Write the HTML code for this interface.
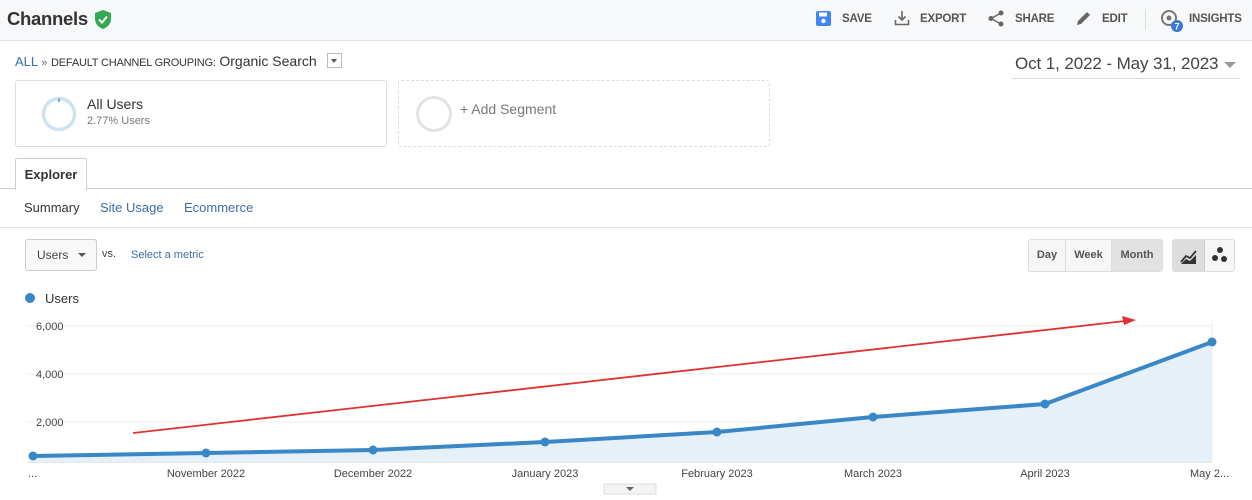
<!DOCTYPE html>
<html><head><style>
body{margin:0;width:1252px;height:500px;background:#fff;font-family:"Liberation Sans",Arial,sans-serif;position:relative;overflow:hidden;color:#333}
.a{position:absolute}
.hdr{left:0;top:0;width:1252px;height:40px;background:#f7f8f9;border-bottom:1px solid #e3e3e3}
.tb{font-size:11.5px;color:#555;font-weight:bold;top:13px;letter-spacing:-0.2px}
.link{color:#3b6ea5}
</style></head><body>
<div class="a hdr"></div>
<div class="a" style="left:7px;top:8px;font-size:18.5px;font-weight:bold;color:#333;letter-spacing:-0.3px">Channels</div>
<svg class="a" style="left:94px;top:10px" width="18" height="19" viewBox="0 0 18 19"><path d="M9 0L17 3V9C17 14 13 17.5 9 19C5 17.5 1 14 1 9V3Z" fill="#34a853"/><path d="M5 9.5L8 12.5L13 6.5" stroke="#fff" stroke-width="2" fill="none"/></svg>
<svg class="a" style="left:816px;top:11px" width="15" height="15"><rect x="0" y="0" width="15" height="15" rx="2" fill="#4285f4"/><rect x="3" y="1.5" width="8" height="4" fill="#fff"/><circle cx="7.5" cy="10" r="2.2" fill="#fff"/></svg>
<div class="a tb" style="left:842px">SAVE</div>
<svg class="a" style="left:894px;top:10px" width="16" height="16" fill="none" stroke="#666" stroke-width="1.6"><path d="M8 1V10M4.5 6.5L8 10L11.5 6.5M1.5 10V14.5H14.5V10"/></svg>
<div class="a tb" style="left:920px">EXPORT</div>
<svg class="a" style="left:988px;top:10px" width="16" height="17"><circle cx="13" cy="3" r="2.5" fill="#666"/><circle cx="3" cy="8.5" r="2.5" fill="#666"/><circle cx="13" cy="14" r="2.5" fill="#666"/><path d="M13 3L3 8.5L13 14" stroke="#666" stroke-width="1.5" fill="none"/></svg>
<div class="a tb" style="left:1015px">SHARE</div>
<svg class="a" style="left:1076px;top:11px" width="15" height="15"><path d="M1 14L2 10L11 1L14 4L5 13Z" fill="#666"/></svg>
<div class="a tb" style="left:1102px">EDIT</div>
<div class="a" style="left:1145px;top:9px;width:1px;height:21px;background:#ddd"></div>
<svg class="a" style="left:1160px;top:8px" width="26" height="26"><circle cx="9" cy="10" r="7" fill="none" stroke="#777" stroke-width="2"/><circle cx="9" cy="10" r="2.5" fill="#777"/><circle cx="17" cy="18" r="6" fill="#3c78d8"/><text x="17" y="21.5" font-size="9" fill="#fff" text-anchor="middle" font-family="Liberation Sans" font-weight="bold">7</text></svg>
<div class="a tb" style="left:1189px">INSIGHTS</div>

<div class="a" style="left:15px;top:53px;font-size:13px"><span class="link">ALL</span> <span style="color:#666;font-size:11px">»</span> <span style="font-size:11px;color:#333;letter-spacing:-0.2px">DEFAULT CHANNEL GROUPING:</span> <span style="font-size:14px;color:#333">Organic Search</span></div>
<div class="a" style="left:327px;top:53px;width:13px;height:13px;border:1px solid #bbb;background:#fff"><div style="margin:5px 3px;border-left:3.5px solid transparent;border-right:3.5px solid transparent;border-top:4px solid #555;width:0"></div></div>
<div class="a" style="left:1015px;top:54px;font-size:17px;color:#444;letter-spacing:-0.1px">Oct 1, 2022 - May 31, 2023</div>
<div class="a" style="left:1224px;top:62px;border-left:6px solid transparent;border-right:6px solid transparent;border-top:6px solid #999"></div>
<div class="a" style="left:1012px;top:78px;width:228px;height:1px;background:#ddd"></div>

<div class="a" style="left:15px;top:80px;width:370px;height:65px;border:1px solid #ddd;border-radius:3px"></div>
<svg class="a" style="left:41px;top:96px" width="36" height="36"><circle cx="18" cy="18" r="15.5" fill="none" stroke="#cde3f1" stroke-width="3.5"/><path d="M18 2.5V6" stroke="#4a90c8" stroke-width="1.5"/></svg>
<div class="a" style="left:87px;top:96px;font-size:14px;color:#333">All Users</div>
<div class="a" style="left:87px;top:115px;font-size:11px;color:#777">2.77% Users</div>
<div class="a" style="left:398px;top:80px;width:370px;height:65px;border:1px dashed #ddd;border-radius:3px"></div>
<div class="a" style="left:416px;top:96px;width:30px;height:30px;border:3px solid #e3e3e3;border-radius:50%"></div>
<div class="a" style="left:460px;top:101px;font-size:14px;color:#777">+ Add Segment</div>

<div class="a" style="left:0;top:188px;width:1252px;height:1px;background:#ccc"></div>
<div class="a" style="left:15px;top:158px;width:70px;height:31px;border:1px solid #ccc;border-bottom:none;background:#fff;border-radius:2px 2px 0 0;font-size:13px;font-weight:bold;text-align:center;line-height:31px;color:#333">Explorer</div>
<div class="a" style="left:24px;top:200px;font-size:13px;color:#333">Summary</div>
<div class="a link" style="left:100px;top:200px;font-size:13px">Site Usage</div>
<div class="a link" style="left:184px;top:200px;font-size:13px">Ecommerce</div>
<div class="a" style="left:0;top:227px;width:1252px;height:1px;background:#e3e3e3"></div>

<div class="a" style="left:25px;top:239px;width:72px;height:32px;border:1px solid #ccc;border-radius:3px;background:#f8f8f8;font-size:12px;line-height:31px;color:#444;padding-left:11px;box-sizing:border-box">Users</div>
<div class="a" style="left:78px;top:253px;border-left:4px solid transparent;border-right:4px solid transparent;border-top:4px solid #555"></div>
<div class="a" style="left:102px;top:248px;font-size:11px;color:#444">vs.</div>
<div class="a link" style="left:131px;top:249px;font-size:11px">Select a metric</div>

<div class="a" style="left:1028px;top:239px;width:133px;height:31px;border:1px solid #ddd;border-radius:3px;background:#f6f6f6;font-size:11px;font-weight:bold;color:#555;display:flex">
<div style="width:36px;text-align:center;line-height:31px;border-right:1px solid #ddd">Day</div>
<div style="width:45px;text-align:center;line-height:31px;border-right:1px solid #ddd">Week</div>
<div style="flex:1;text-align:center;line-height:31px;background:#e2e2e2">Month</div></div>
<div class="a" style="left:1172px;top:239px;width:61px;height:31px;border:1px solid #ddd;border-radius:3px;background:#f6f6f6;display:flex">
<div style="width:31px;background:#ddd;border-right:1px solid #ccc"><svg width="31" height="31"><path d="M8 22L13 16L17 18L23 11" stroke="#333" stroke-width="1.8" fill="none"/><path d="M8 24L13 19L17 21L23 15V24Z" fill="#333"/></svg></div>
<div style="flex:1"><svg width="29" height="31"><circle cx="15" cy="10" r="3" fill="#333"/><circle cx="10" cy="18" r="3" fill="#333"/><circle cx="19" cy="19" r="3" fill="#333"/></svg></div></div>

<div class="a" style="left:25px;top:293px;width:10px;height:10px;border-radius:50%;background:#3a87c7"></div>
<div class="a" style="left:45px;top:291px;font-size:13px;color:#333">Users</div>

<svg class="a" style="left:0;top:300px" width="1252" height="200">
<g stroke="#eee" stroke-width="1"><line x1="28" y1="26" x2="1212" y2="26"/><line x1="28" y1="74" x2="1212" y2="74"/><line x1="28" y1="122" x2="1212" y2="122"/></g>
<line x1="28" y1="162" x2="1212" y2="162" stroke="#ccc"/>
<line x1="1212" y1="20" x2="1212" y2="162" stroke="#eee"/>
<g font-family="Liberation Sans" font-size="11" fill="#444">
<text x="36" y="30">6,000</text><text x="36" y="78">4,000</text><text x="36" y="126">2,000</text>
<text x="28" y="177">...</text>
<text x="206" y="177" text-anchor="middle">November 2022</text>
<text x="373" y="177" text-anchor="middle">December 2022</text>
<text x="545" y="177" text-anchor="middle">January 2023</text>
<text x="717" y="177" text-anchor="middle">February 2023</text>
<text x="873" y="177" text-anchor="middle">March 2023</text>
<text x="1045" y="177" text-anchor="middle">April 2023</text>
<text x="1190" y="177">May 2...</text>
</g>
<path d="M33 156L206 153L373 150L545 142L717 132L873 117L1045 104L1212 42V162H33Z" fill="#e5f0f8"/>
<path d="M33 156L206 153L373 150L545 142L717 132L873 117L1045 104L1212 42" stroke="#3a87c7" stroke-width="4" fill="none"/>
<g fill="#3a87c7"><circle cx="33" cy="156" r="4.5"/><circle cx="206" cy="153" r="4.5"/><circle cx="373" cy="150" r="4.5"/><circle cx="545" cy="142" r="4.5"/><circle cx="717" cy="132" r="4.5"/><circle cx="873" cy="117" r="4.5"/><circle cx="1045" cy="104" r="4.5"/><circle cx="1212" cy="42" r="4.5"/></g>
<line x1="133" y1="133" x2="1125" y2="21" stroke="#d33" stroke-width="1.8"/>
<path d="M1136 20L1122 16L1124 25Z" fill="#d33"/>
<rect x="604" y="184" width="52" height="10" fill="#f4f4f4" stroke="#ddd"/>
<path d="M626 187L630 191L634 187Z" fill="#666"/>
</svg>
</body></html>
